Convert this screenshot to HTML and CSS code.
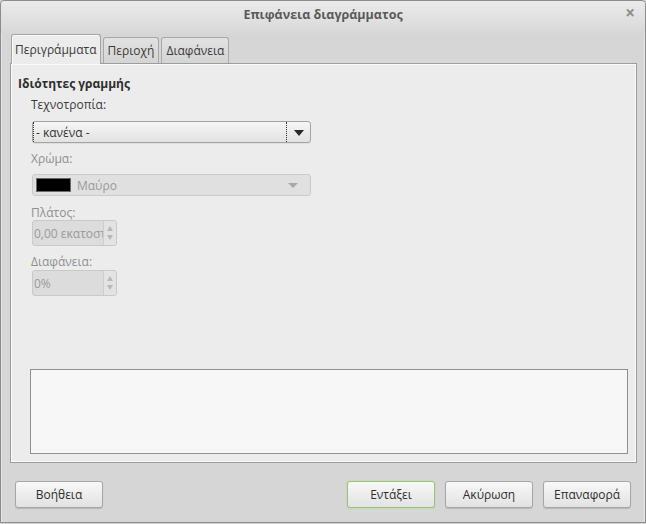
FILE: index.html
```html
<!DOCTYPE html>
<html lang="el">
<head>
<meta charset="utf-8">
<title>Επιφάνεια διαγράμματος</title>
<link rel="stylesheet" href="styles.css">
</head>
<body>
<div class="window">
  <div class="titlebar">
    <span class="title">Επιφάνεια διαγράμματος</span>
    <span class="close">×</span>
  </div>
  <div class="tabs">
    <div class="tab active">Περιγράμματα</div>
    <div class="tab">Περιοχή</div>
    <div class="tab">Διαφάνεια</div>
  </div>
  <div class="panel">
    <div class="section-title">Ιδιότητες γραμμής</div>
    <div class="label l-style">Τεχνοτροπία:</div>
    <div class="combo c-style">
      <span class="combo-text focus">- κανένα -</span>
      <span class="combo-sep"></span>
      <span class="combo-arrow"></span>
    </div>
    <div class="label disabled l-color">Χρώμα:</div>
    <div class="combo combo-disabled c-color">
      <span class="swatch"></span>
      <span class="combo-text">Μαύρο</span>
      <span class="combo-arrow"></span>
    </div>
    <div class="label disabled l-width">Πλάτος:</div>
    <div class="spin s-width">
      <span class="spin-text">0,00 εκατοστ</span>
      <span class="spin-btns"><span class="up"></span><span class="down"></span></span>
    </div>
    <div class="label disabled l-trans">Διαφάνεια:</div>
    <div class="spin s-trans">
      <span class="spin-text">0%</span>
      <span class="spin-btns"><span class="up"></span><span class="down"></span></span>
    </div>
    <div class="preview"></div>
  </div>
  <div class="buttons">
    <div class="btn">Βοήθεια</div>
    <div class="spacer"></div>
    <div class="btn default">Εντάξει</div>
    <div class="btn">Ακύρωση</div>
    <div class="btn">Επαναφορά</div>
  </div>
</div>
</body>
</html>
```

FILE: styles.css
```css
* { box-sizing: border-box; }
html, body { margin: 0; padding: 0; background: #d6d6d6; }
body {
  font-family: "Open Sans", "DejaVu Sans", sans-serif;
  font-size: 12px;
  color: #3a3a3a;
}
.window {
  width: 646px;
  height: 523px;
  border: 1px solid #8c8c8c;
  border-radius: 4px 4px 0 0;
  background: #d6d6d6;
  display: flex;
  flex-direction: column;
  box-shadow: inset 1px 0 #e6e6e6, inset -1px 0 #e6e6e6;
}
.titlebar {
  height: 32px;
  flex: none;
  display: flex;
  align-items: center;
  justify-content: center;
  position: relative;
  background: linear-gradient(#ebebeb, #d8d8d8);
  border-radius: 4px 4px 0 0;
}
.title {
  font-weight: bold;
  font-size: 12.5px;
  color: #5a5a5a;
  margin-top: -5px;
}
.close {
  position: absolute;
  right: 10px;
  top: 2px;
  font-size: 17px;
  font-weight: bold;
  color: #8e8e8e;
  line-height: 20px;
}
.tabs {
  display: flex;
  align-items: flex-end;
  height: 30px;
  margin-left: 10px;
  gap: 2px;
  flex: none;
  position: relative;
  z-index: 2;
}
.tab {
  height: 26px;
  padding: 0 4px;
  border: 1px solid #a8a8a8;
  border-bottom: none;
  border-radius: 3px 3px 0 0;
  background: linear-gradient(#e2e2e2, #d4d4d4);
  display: flex;
  align-items: center;
  color: #3a3a3a;
}
.tab.active {
  height: 30px;
  background: #ececec;
  border-color: #a4a4a4;
  margin-bottom: -1px;
  padding: 0 3px;
  box-shadow: inset 1px 1px #fafafa;
}
.panel {
  margin: 0 8px 0 9px;
  height: 400px;
  flex: none;
  border: 1px solid #9c9c9c;
  background: #ececec;
  box-shadow: inset 1px 1px #fafafa, inset -1px -1px #fafafa;
  display: flex;
  flex-direction: column;
  align-items: flex-start;
  padding-left: 7px;
}
.section-title {
  margin-top: 12px;
  font-weight: bold;
  line-height: 16px;
  color: #2e2e2e;
}
.label {
  line-height: 16px;
  margin-left: 13px;
}
.label.disabled { color: #8f8f8f; }
.l-style { margin-top: 5px; }
.l-color { margin-top: 8px; }
.l-width { margin-top: 9px; line-height: 15px; }
.l-trans { margin-top: 8px; line-height: 15px; }
.combo {
  margin-left: 14px;
  width: 279px;
  height: 22px;
  border: 1px solid #a3a3a3;
  border-radius: 3px;
  background: linear-gradient(#f6f6f6, #e2e2e2);
  box-shadow: 0 1px 0 #dedede;
  display: flex;
  align-items: center;
  position: relative;
}
.c-style { margin-top: 8px; }
.c-color { margin-top: 7px; }
.combo-text {
  flex: 1;
  height: 100%;
  display: flex;
  align-items: center;
  color: #333;
  padding-left: 2px;
}
.combo-text.focus { border-left: 1px dotted #333; }
.combo-sep {
  width: 0;
  height: 100%;
  border-left: 1px dotted #333;
}
.combo-arrow {
  width: 23px;
  height: 100%;
  display: flex;
  align-items: center;
  justify-content: center;
}
.combo-arrow::before {
  content: "";
  border-left: 5px solid transparent;
  border-right: 5px solid transparent;
  border-top: 6px solid #2a2a2a;
  margin-top: 1px;
}
.combo-disabled {
  background: #e0e0e0;
  border-color: #cbcbcb;
  box-shadow: none;
}
.combo-disabled .combo-text { color: #9a9a9a; padding-left: 6px; }
.combo-disabled .combo-arrow { width: 34px; }
.combo-disabled .combo-arrow::before { border-top-color: #a8a8a8; border-top-width: 5px; }
.swatch {
  width: 35px;
  height: 14px;
  background: #000;
  border: 1px solid #6a6a6a;
  margin-left: 3px;
  flex: none;
}
.spin {
  margin-left: 14px;
  width: 85px;
  height: 26px;
  border: 1px solid #c9c9c9;
  border-radius: 3px;
  background: #dcdcdc;
  display: flex;
  overflow: hidden;
}
.s-width { margin-top: 0; }
.s-trans { margin-top: 1px; }
.spin-text {
  flex: 1;
  min-width: 0;
  color: #9a9a9a;
  display: flex;
  align-items: center;
  padding-left: 1px;
  white-space: nowrap;
  overflow: hidden;
}
.spin-btns {
  width: 13px;
  flex: none;
  border-left: 1px solid #cdcdcd;
  background: #e3e3e3;
  display: flex;
  flex-direction: column;
  align-items: center;
  justify-content: center;
  gap: 4px;
}
.spin-btns .up {
  border-left: 3px solid transparent;
  border-right: 3px solid transparent;
  border-bottom: 5px solid #b8b8b8;
}
.spin-btns .down {
  border-left: 3px solid transparent;
  border-right: 3px solid transparent;
  border-top: 5px solid #b8b8b8;
}
.preview {
  margin-top: auto;
  margin-bottom: 8px;
  margin-left: 12px;
  align-self: stretch;
  margin-right: 8px;
  height: 85px;
  border: 1px solid #8e8e8e;
  background: #f7f7f7;
}
.buttons {
  display: flex;
  align-items: center;
  padding: 0 14px 0 14px;
  margin-top: 18px;
  gap: 10px;
}
.spacer { flex: 1; }
.btn {
  width: 88px;
  height: 27px;
  border: 1px solid #a6a6a6;
  border-radius: 3px;
  background: linear-gradient(#f8f8f8, #e2e2e2);
  box-shadow: 0 1px 1px rgba(0,0,0,0.15);
  display: flex;
  align-items: center;
  justify-content: center;
  color: #2e2e2e;
}
.btn.default {
  border-color: #9bbf80;
  box-shadow: 0 0 0 1px #c6dcb3, 0 1px 1px rgba(0,0,0,0.15);
}
```
